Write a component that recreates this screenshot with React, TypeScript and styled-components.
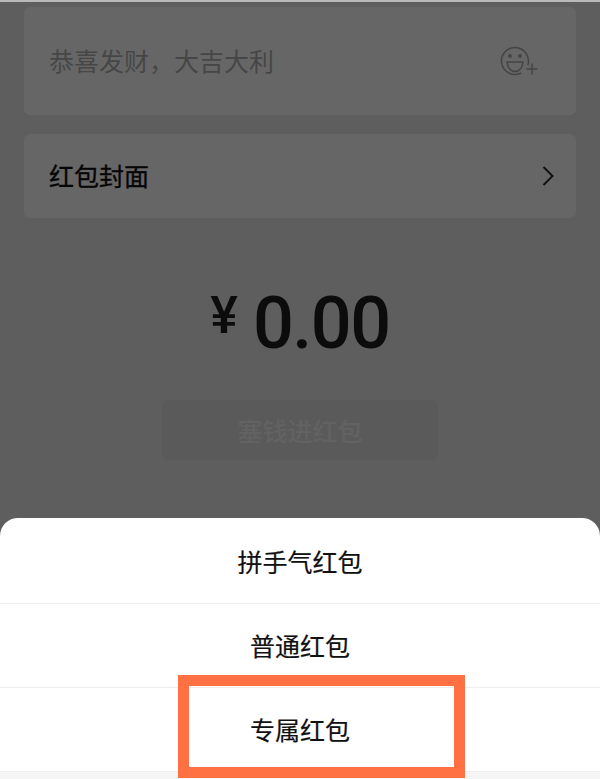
import React from 'react';
import styled, { createGlobalStyle } from 'styled-components';

const cjk = '"Noto Sans CJK SC", "Liberation Sans", sans-serif';

const GlobalStyle = createGlobalStyle`
  html, body {
    margin: 0;
    padding: 0;
    background: #5e5e5e;
  }
  * {
    box-sizing: border-box;
  }
`;

const sheetItems = ['拼手气红包', '普通红包', '专属红包'];

const App = (): JSX.Element => {
  return (
    <Page>
      <GlobalStyle />
      <TopEdge />
      <Content>
        <GreetingCard>
          <Greeting>恭喜发财{'\uFF0C'}大吉大利</Greeting>
          <svg width="40" height="32" viewBox="0 0 40 32" fill="none" stroke="#444" strokeWidth="1.5">
            <path d="M28 19.500A13.500 13.500 0 1 0 20.700 28.200" strokeLinecap="round" />
            <circle cx="10" cy="11" r="1.900" fill="#444" stroke="none" />
            <circle cx="20" cy="11" r="1.900" fill="#444" stroke="none" />
            <path d="M7 17H23C22.500 23 19 26.500 15 26.500S7.500 23 7 17Z" />
            <path d="M26.500 24H37.500M32 18.500V29.500" />
          </svg>
        </GreetingCard>
        <CoverCard>
          <CoverLabel>红包封面</CoverLabel>
          <svg width="12" height="20" viewBox="0 0 12 20" fill="none" stroke="#111" strokeWidth="1.900">
            <path d="M1.500 1L10.500 10L1.500 19" />
          </svg>
        </CoverCard>
        <Amount>
          <Currency>¥</Currency>
          <Digits>0.00</Digits>
        </Amount>
        <SubmitButton>塞钱进红包</SubmitButton>
      </Content>
      <Sheet>
        {sheetItems.map((item) => (
          <SheetRow key={item}>{item}</SheetRow>
        ))}
        <SheetFooter />
      </Sheet>
      <Highlight />
    </Page>
  );
};

export default App;

const Page = styled.div`
  position: relative;
  width: 600px;
  height: 779px;
  overflow: hidden;
  background: #5e5e5e;
  font-family: ${cjk};
`;

const TopEdge = styled.div`
  height: 2px;
  background: #b9b9b9;
`;

const Content = styled.div`
  display: flex;
  flex-direction: column;
  align-items: center;
  padding: 5px 24px 0;
`;

const GreetingCard = styled.div`
  display: flex;
  align-items: center;
  justify-content: space-between;
  width: 100%;
  height: 108px;
  padding: 0 36px 0 25px;
  border-radius: 6px;
  background: #666666;
`;

const Greeting = styled.div`
  margin-top: -2px;
  font-size: 25px;
  line-height: 36px;
  color: #464646;
`;

const CoverCard = styled.div`
  display: flex;
  align-items: center;
  justify-content: space-between;
  width: 100%;
  height: 84px;
  margin-top: 19px;
  padding: 0 22px 0 25px;
  border-radius: 6px;
  background: #666666;
`;

const CoverLabel = styled.div`
  margin-top: -2px;
  font-size: 25px;
  line-height: 36px;
  color: #050505;
  -webkit-text-stroke: 0.3px #050505;
`;

const Amount = styled.div`
  display: flex;
  align-items: flex-start;
  height: 88px;
  margin-top: 62px;
  color: #0c0c0c;
`;

const Currency = styled.div`
  margin-top: 10px;
  margin-right: 15px;
  font-family: "Roboto", "Liberation Sans", sans-serif;
  font-size: 52px;
  line-height: 52px;
  font-weight: 500;
`;

const Digits = styled.div`
  font-family: "Roboto", "Liberation Sans", sans-serif;
  font-size: 72px;
  line-height: 88px;
  font-weight: 500;
  letter-spacing: -1.500px;
`;

const SubmitButton = styled.div`
  display: flex;
  align-items: center;
  justify-content: center;
  width: 276px;
  height: 60px;
  margin-top: 32px;
  border-radius: 6px;
  background: #5a5a5a;
  font-size: 25px;
  font-weight: 500;
  color: #626262;
`;

const Sheet = styled.div`
  position: absolute;
  left: 0;
  right: 0;
  bottom: 0;
  height: 261px;
  padding-top: 2px;
  border-radius: 18px 18px 0 0;
  background: #ffffff;
  overflow: hidden;
`;

const SheetRow = styled.div`
  display: flex;
  align-items: center;
  justify-content: center;
  height: 84px;
  padding-bottom: 2px;
  border-bottom: 1px solid #eeeeee;
  font-size: 25px;
  color: #111111;
  -webkit-text-stroke: 0.2px #111111;
`;

const SheetFooter = styled.div`
  height: 8px;
  background: #f5f5f5;
`;

const Highlight = styled.div`
  position: absolute;
  left: 178px;
  top: 675px;
  width: 287px;
  height: 103px;
  border: 11px solid #ff7043;
`;
